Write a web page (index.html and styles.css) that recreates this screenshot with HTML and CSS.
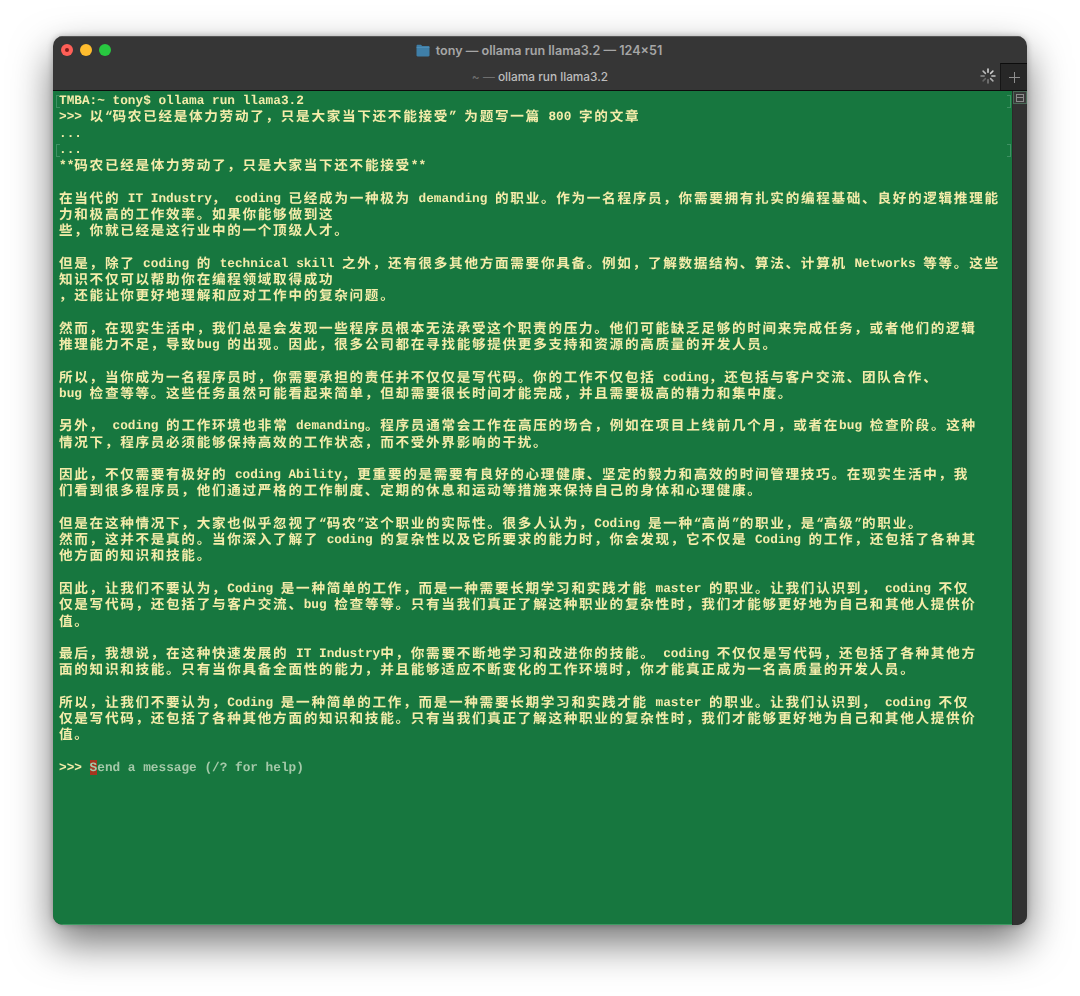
FILE: index.html
```html
<!DOCTYPE html>
<html lang="zh-CN">
<head>
<meta charset="utf-8">
<title>tony — ollama run llama3.2 — 124×51</title>
<link rel="stylesheet" href="styles.css">
</head>
<body>
<div class="window">
  <header class="chrome">
    <div class="titlebar">
      <div class="lights">
        <span class="light red"></span>
        <span class="light yellow"></span>
        <span class="light green"></span>
      </div>
      <div class="title">
        <svg class="folder" width="14" height="13" viewBox="0 0 14 13"><path d="M0.5 2.2C0.5 1.3 1 .8 1.9 .8H5l1.2 1.3h6.3c.6 0 1 .4 1 1v8.2c0 .7-.4 1.1-1.1 1.1H1.6C.9 12.4 .5 12 .5 11.3Z" fill="#3f7fa8"/><path d="M.5 3.4h13V4H.5Z" fill="#5c9cc4"/></svg>
        <span>tony — ollama run llama3.2 — 124×51</span>
      </div>
    </div>
    <div class="tabbar">
      <div class="tab"><span class="dim">~ — </span>ollama run llama3.2</div>
      <svg class="spinner" width="16" height="16" viewBox="0 0 16 16" fill="none" stroke-width="1.5" stroke-linecap="round">
        <path d="M8 1v3.2" stroke="#e0e0e0"/><path d="M12.9 3.1l-2.3 2.3" stroke="#d0d0d0"/><path d="M15 8h-3.2" stroke="#c4c4c4"/><path d="M12.9 12.9l-2.3-2.3" stroke="#b0b0b0"/><path d="M8 15v-3.2" stroke="#808080"/><path d="M3.1 12.9l2.3-2.3" stroke="#666"/><path d="M1 8h3.2" stroke="#909090"/><path d="M3.1 3.1l2.3 2.3" stroke="#bbb"/>
      </svg>
      <div class="newtab">
        <svg width="11" height="11" viewBox="0 0 11 11"><path d="M5.5 0v11M0 5.5h11" stroke="#8e8e8e" stroke-width="1"/></svg>
      </div>
    </div>
  </header>
  <div class="body">
    <main class="term">
      <div class="r mark">TMBA:~ tony$ ollama run llama3.2</div>
      <div class="r">&gt;&gt;&gt; <span class="c">以</span>“<span class="c">码农已经是体力劳动了，只是大家当下还不能接受</span>” <span class="c">为题写一篇</span> 800 <span class="c">字的文章</span></div>
      <div class="r">...</div>
      <div class="r mark">...</div>
      <div class="r">**<span class="c">码农已经是体力劳动了，只是大家当下还不能接受</span>**</div>
      <div class="r"></div>
      <div class="r"><span class="c">在当代的</span> IT Industry<span class="c">，</span> coding <span class="c">已经成为一种极为</span> demanding <span class="c">的职业。作为一名程序员，你需要拥有扎实的编程基础、良好的逻辑推理能</span></div>
      <div class="r"><span class="c">力和极高的工作效率。如果你能够做到这</span></div>
      <div class="r"><span class="c">些，你就已经是这行业中的一个顶级人才。</span></div>
      <div class="r"></div>
      <div class="r"><span class="c">但是，除了</span> coding <span class="c">的</span> technical skill <span class="c">之外，还有很多其他方面需要你具备。例如，了解数据结构、算法、计算机</span> Networks <span class="c">等等。这些</span></div>
      <div class="r"><span class="c">知识不仅可以帮助你在编程领域取得成功</span></div>
      <div class="r"><span class="c">，还能让你更好地理解和应对工作中的复杂问题。</span></div>
      <div class="r"></div>
      <div class="r"><span class="c">然而，在现实生活中，我们总是会发现一些程序员根本无法承受这个职责的压力。他们可能缺乏足够的时间来完成任务，或者他们的逻辑</span></div>
      <div class="r"><span class="c">推理能力不足，导致</span>bug <span class="c">的出现。因此，很多公司都在寻找能够提供更多支持和资源的高质量的开发人员。</span></div>
      <div class="r"></div>
      <div class="r"><span class="c">所以，当你成为一名程序员时，你需要承担的责任并不仅仅是写代码。你的工作不仅包括</span> coding<span class="c">，还包括与客户交流、团队合作、</span></div>
      <div class="r">bug <span class="c">检查等等。这些任务虽然可能看起来简单，但却需要很长时间才能完成，并且需要极高的精力和集中度。</span></div>
      <div class="r"></div>
      <div class="r"><span class="c">另外，</span> coding <span class="c">的工作环境也非常</span> demanding<span class="c">。程序员通常会工作在高压的场合，例如在项目上线前几个月，或者在</span>bug <span class="c">检查阶段。这种</span></div>
      <div class="r"><span class="c">情况下，程序员必须能够保持高效的工作状态，而不受外界影响的干扰。</span></div>
      <div class="r"></div>
      <div class="r"><span class="c">因此，不仅需要有极好的</span> coding Ability<span class="c">，更重要的是需要有良好的心理健康、坚定的毅力和高效的时间管理技巧。在现实生活中，我</span></div>
      <div class="r"><span class="c">们看到很多程序员，他们通过严格的工作制度、定期的休息和运动等措施来保持自己的身体和心理健康。</span></div>
      <div class="r"></div>
      <div class="r"><span class="c">但是在这种情况下，大家也似乎忽视了</span>“<span class="c">码农</span>”<span class="c">这个职业的实际性。很多人认为，</span>Coding <span class="c">是一种</span>“<span class="c">高尚</span>”<span class="c">的职业，是</span>“<span class="c">高级</span>”<span class="c">的职业。</span></div>
      <div class="r"><span class="c">然而，这并不是真的。当你深入了解了</span> coding <span class="c">的复杂性以及它所要求的能力时，你会发现，它不仅是</span> Coding <span class="c">的工作，还包括了各种其</span></div>
      <div class="r"><span class="c">他方面的知识和技能。</span></div>
      <div class="r"></div>
      <div class="r"><span class="c">因此，让我们不要认为，</span>Coding <span class="c">是一种简单的工作，而是一种需要长期学习和实践才能</span> master <span class="c">的职业。让我们认识到，</span> coding <span class="c">不仅</span></div>
      <div class="r"><span class="c">仅是写代码，还包括了与客户交流、</span>bug <span class="c">检查等等。只有当我们真正了解这种职业的复杂性时，我们才能够更好地为自己和其他人提供价</span></div>
      <div class="r"><span class="c">值。</span></div>
      <div class="r"></div>
      <div class="r"><span class="c">最后，我想说，在这种快速发展的</span> IT Industry<span class="c">中，你需要不断地学习和改进你的技能。</span> coding <span class="c">不仅仅是写代码，还包括了各种其他方</span></div>
      <div class="r"><span class="c">面的知识和技能。只有当你具备全面性的能力，并且能够适应不断变化的工作环境时，你才能真正成为一名高质量的开发人员。</span></div>
      <div class="r"></div>
      <div class="r"><span class="c">所以，让我们不要认为，</span>Coding <span class="c">是一种简单的工作，而是一种需要长期学习和实践才能</span> master <span class="c">的职业。让我们认识到，</span> coding <span class="c">不仅</span></div>
      <div class="r"><span class="c">仅是写代码，还包括了各种其他方面的知识和技能。只有当我们真正了解这种职业的复杂性时，我们才能够更好地为自己和其他人提供价</span></div>
      <div class="r"><span class="c">值。</span></div>
      <div class="r"></div>
      <div class="r">&gt;&gt;&gt; <span class="hint"><span class="cursor">S</span>end a message (/? for help)</span></div>
    </main>
    <aside class="scrollbar">
      <div class="split"><span class="split-icon"></span></div>
    </aside>
  </div>
</div>
</body>
</html>
```
FILE: styles.css
```css
* { box-sizing: border-box; }
html, body { margin: 0; height: 100%; background: #fff; }
body { padding: 36px 53px 0; overflow: hidden; }

.window {
  width: 974px;
  height: 889px;
  display: flex;
  flex-direction: column;
  border-radius: 10px;
  overflow: hidden;
  background: #363636;
  box-shadow: 0 18px 40px rgba(0,0,0,.55), 0 0 6px rgba(0,0,0,.25);
}
.chrome {
  flex: none;
  height: 55px;
  border-top: 1px solid #565656;
  border-bottom: 1px solid #0c0c0c;
  display: flex;
  flex-direction: column;
  font-family: Inter, "Liberation Sans", sans-serif;
}
.titlebar {
  height: 26px;
  padding: 0 10px 0 8px;
  display: grid;
  grid-template-columns: 1fr auto 1fr;
  align-items: center;
}
.lights { display: flex; gap: 7px; }
.light { width: 12px; height: 12px; border-radius: 50%; display: flex; align-items: center; justify-content: center; }
.red { background: #ff5f57; }
.red::after { content: ""; width: 4px; height: 4px; border-radius: 50%; background: #7e1c18; }
.yellow { background: #febc2e; }
.green { background: #28c840; }
.title {
  display: flex;
  align-items: center;
  gap: 6px;
  font-size: 12.6px;
  font-weight: 600;
  color: #a6a6a6;
  white-space: nowrap;
}
.folder { flex: none; }
.tabbar {
  flex: 1;
  display: flex;
  align-items: center;
  position: relative;
  justify-content: center;
}
.tab {
  font-size: 11.85px;
  font-weight: 500;
  color: #bdbdbd;
  white-space: nowrap;
}
.dim { color: #6f6f6f; }
.spinner { position: absolute; right: 31px; top: 5px; }
.newtab {
  position: absolute;
  right: 0;
  top: 0;
  bottom: 0;
  width: 27px;
  background: #272727;
  border-top: 1px solid #0c0c0c;
  border-left: 1px solid #161616;
  display: flex;
  align-items: center;
  justify-content: center;
}

.body { flex: 1; display: flex; min-height: 0; }
.term {
  flex: 1;
  background: #17773f;
  border-bottom: 1px solid #3f9a63;
  padding: 2px 0 0 6px;
  font-family: "Liberation Mono", monospace;
  font-size: 12.75px;
  font-weight: bold;
  color: #f5ecaa;
  text-rendering: geometricPrecision;
  filter: blur(.3px);
}
.r {
  position: relative;
  height: 16.27px;
  line-height: 16.27px;
  white-space: pre;
}
.c {
  font-family: "Noto Sans CJK SC", sans-serif;
  font-size: 13.6px;
  line-height: 0;
  letter-spacing: 1.7px;
  font-weight: 700;
  vertical-align: -0.6px;
}
.mark::before, .mark::after {
  position: absolute;
  top: 2px;
  width: 3px;
  height: 11px;
  border: 1px solid #3f9163;
  content: "";
}
.mark::before { left: -3px; border-right: 0; }
.mark::after { left: 948px; border-left: 0; }
.hint { color: #a5c9a9; }
.cursor { background: #a5351f; }

.scrollbar { flex: none; width: 15px; background: #313131; border-left: 1px solid #2a2a2a; }
.split {
  height: 13px;
  border: 1px solid #4a6a58;
  background: #3a3a3a;
  display: flex;
  align-items: center;
  justify-content: center;
}
.split-icon {
  width: 8px;
  height: 8px;
  border: 1px solid #8c8c8c;
  background: linear-gradient(#3a3a3a 0 2px, #8c8c8c 2px 3px, #3a3a3a 3px);
}
```
